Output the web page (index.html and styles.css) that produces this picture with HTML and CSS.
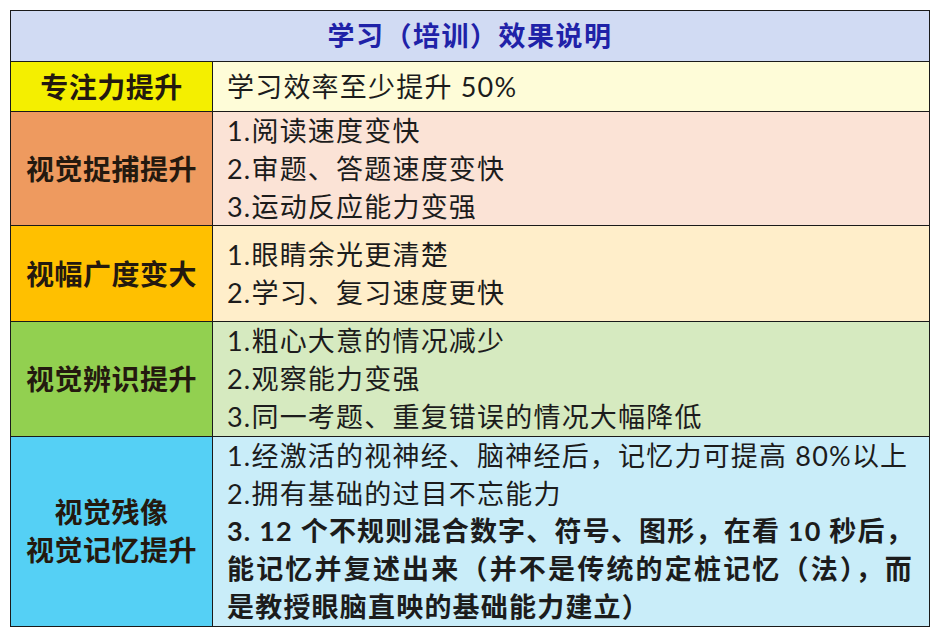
FILE: index.html
```html
<!DOCTYPE html>
<html lang="zh-CN">
<head>
<meta charset="utf-8">
<title>学习（培训）效果说明</title>
<link rel="stylesheet" href="styles.css">
</head>
<body>
<table class="effects">
  <colgroup>
    <col class="col-label">
    <col class="col-desc">
  </colgroup>
  <thead>
    <tr class="row-title"><th colspan="2" class="title">学习（培训）效果说明</th></tr>
  </thead>
  <tbody>
    <tr class="row r1">
      <th class="label">专注力提升</th>
      <td class="desc"><span class="line">学习效率至少提升 50%</span></td>
    </tr>
    <tr class="row r2">
      <th class="label">视觉捉捕提升</th>
      <td class="desc">
        <span class="line">1.阅读速度变快</span>
        <span class="line">2.审题、答题速度变快</span>
        <span class="line">3.运动反应能力变强</span>
      </td>
    </tr>
    <tr class="row r3">
      <th class="label">视幅广度变大</th>
      <td class="desc">
        <span class="line">1.眼睛余光更清楚</span>
        <span class="line">2.学习、复习速度更快</span>
      </td>
    </tr>
    <tr class="row r4">
      <th class="label">视觉辨识提升</th>
      <td class="desc">
        <span class="line">1.粗心大意的情况减少</span>
        <span class="line">2.观察能力变强</span>
        <span class="line">3.同一考题、重复错误的情况大幅降低</span>
      </td>
    </tr>
    <tr class="row r5">
      <th class="label"><span class="line">视觉残像</span><span class="line">视觉记忆提升</span></th>
      <td class="desc">
        <span class="line">1.经激活的视神经、脑神经后，记忆力可提高 80%以上</span>
        <span class="line">2.拥有基础的过目不忘能力</span>
        <span class="line strong justify">3. 12 个不规则混合数字、符号、图形，在看 10 秒后，</span>
        <span class="line strong justify">能记忆并复述出来（并不是传统的定桩记忆（法），而</span>
        <span class="line strong">是教授眼脑直映的基础能力建立）</span>
      </td>
    </tr>
  </tbody>
</table>
</body>
</html>
```
FILE: styles.css
```css
html, body {
  margin: 0;
  padding: 0;
  background: #ffffff;
}

body {
  padding: 10px 0 0 10px;
  font-family: Lato, "Noto Sans CJK SC", sans-serif;
  color: #1c1c1c;
}

.effects {
  border-collapse: collapse;
  width: 919px;
  table-layout: fixed;
}

.col-label { width: 202px; }
.col-desc { width: 717px; }

.effects th,
.effects td {
  border: 1.5px solid #1a1a1a;
  padding: 0;
  vertical-align: middle;
}

.row-title { height: 51px; }
.r1 { height: 50px; }
.r2 { height: 114px; }
.r3 { height: 96px; }
.r4 { height: 113px; }
.r5 { height: 190px; }

.title {
  background: #d1dbf3;
  color: #1f22a8;
  font-size: 27px;
  font-weight: 700;
  letter-spacing: 1.5px;
  text-align: center;
  line-height: 36px;
  padding-left: 6px;
}

.label {
  font-size: 28px;
  font-weight: 700;
  letter-spacing: 0.5px;
  line-height: 38px;
  color: #24190f;
  text-align: center;
}

.effects .desc {
  font-size: 27px;
  letter-spacing: 1.2px;
  line-height: 37.8px;
  padding: 0 16px 0 14px;
  text-align: left;
}

.line {
  display: block;
  white-space: nowrap;
}

.strong { font-weight: 700; }

.justify {
  text-align: justify;
  text-align-last: justify;
}

.r1 .label { background: #f4ef00; }
.r1 .desc { background: #fefcd8; }
.r2 .label { background: #ee9a5f; }
.r2 .desc { background: #fbe3d6; }
.r3 .label { background: #ffc000; }
.r3 .desc { background: #ffeeca; }
.r4 .label { background: #92d050; }
.r4 .desc { background: #d6eac0; }
.r5 .label { background: #55d0f5; }
.r5 .desc { background: #c9edf9; }
```
